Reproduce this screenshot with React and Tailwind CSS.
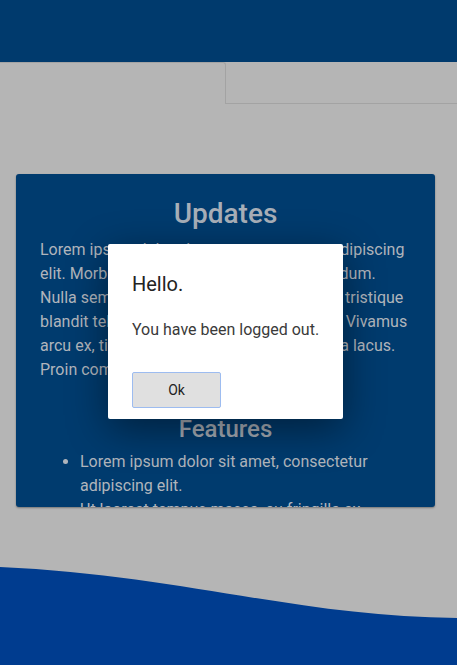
export default function App() {
  return (
    <div
      className="relative min-h-[665px] h-[665px] overflow-hidden bg-[#b5b5b5] flex flex-col"
      style={{ fontFamily: "Roboto, 'Liberation Sans', sans-serif" }}
    >
      <div className="h-[62px] bg-[#003a6d] shrink-0" />
      <div className="flex h-[42px] shrink-0">
        <div className="w-[226px] border-t border-r border-[#a3a3a3] rounded-tr-[3px]" />
        <div className="flex-1 border-b border-[#a3a3a3]" />
      </div>
      <div className="mt-[70px] ml-4 w-[419px] h-[333px] overflow-hidden rounded-[3px] bg-[#003b6e] px-6 pt-[23px] shadow-[0_1px_2px_rgba(0,0,0,0.35)] text-[#b0b5bc]">
        <h2 className="text-center text-[28px] leading-[34px] font-medium text-[#a8afb8]">Updates</h2>
        <p className="mt-[7px] text-[16px] leading-6 whitespace-nowrap">
          Lorem ipsum dolor sit amet, consectetur adipiscing<br />
          elit. Morbi in sapien eget nulla rutrum interdum.<br />
          Nulla semper felis et lorem faucibus, porta tristique<br />
          blandit tellus, at pretium nisi a mollis vitae. Vivamus<br />
          arcu ex, tincidunt quis mauris sed, at lacinia lacus.<br />
          Proin commodo lorem et nisl porta.
        </p>
        <h2 className="mt-[33px] text-center text-[24px] leading-[29px] font-medium text-[#a8afb8]">Features</h2>
        <ul className="mt-[6px] list-disc pl-10 text-[16px] leading-6">
          <li>
            Lorem ipsum dolor sit amet, consectetur<br />adipiscing elit.
          </li>
          <li>Ut laoreet tempus massa, eu fringilla ex gravida.</li>
        </ul>
      </div>
      <svg className="mt-auto block shrink-0" width="457" height="98" viewBox="0 0 457 98" preserveAspectRatio="none">
        <path d="M0,0 C180,8 300,50 457,51 L457,98 L0,98 Z" fill="#003c8f" />
      </svg>

      <div className="absolute left-[108px] top-[244px] w-[235px] h-[175px] rounded-[2px] bg-white pl-6 pt-[28px] shadow-[0_10px_40px_rgba(0,0,0,0.45)]">
        <div className="text-[20px] leading-[24px] text-[#222]">Hello.</div>
        <div className="mt-[23px] text-[16px] leading-[22px] text-[#3a3a3a]">You have been logged out.</div>
        <button className="mt-[31px] w-[89px] h-[36px] rounded-[2px] border border-[#9dbcf0] bg-[#e0e0e0] text-[14px] text-[#222]">
          Ok
        </button>
      </div>
    </div>
  );
}
